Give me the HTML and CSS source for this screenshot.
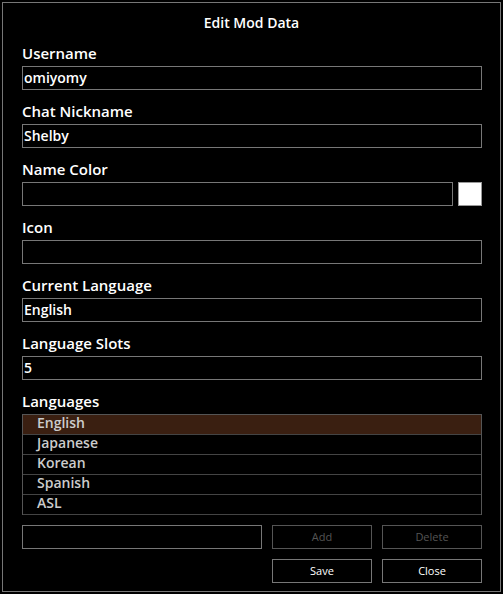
FILE: index.html
```html
<!DOCTYPE html>
<html>
<head>
<meta charset="utf-8">
<link rel="stylesheet" href="styles.css">
</head>
<body>
<div class="dialog">
  <div class="title">Edit Mod Data</div>
  <div class="group">
    <div class="label">Username</div>
    <div class="input">omiyomy</div>
  </div>
  <div class="group">
    <div class="label">Chat Nickname</div>
    <div class="input">Shelby</div>
  </div>
  <div class="group">
    <div class="label">Name Color</div>
    <div class="color-row">
      <div class="input grow"></div>
      <div class="swatch"></div>
    </div>
  </div>
  <div class="group">
    <div class="label">Icon</div>
    <div class="input"></div>
  </div>
  <div class="group">
    <div class="label">Current Language</div>
    <div class="input">English</div>
  </div>
  <div class="group">
    <div class="label">Language Slots</div>
    <div class="input">5</div>
  </div>
  <div class="group">
    <div class="label">Languages</div>
    <div class="list">
      <div class="item selected">English</div>
      <div class="item">Japanese</div>
      <div class="item">Korean</div>
      <div class="item">Spanish</div>
      <div class="item">ASL</div>
    </div>
  </div>
  <div class="actions">
    <div class="input new"></div>
    <div class="btn disabled">Add</div>
    <div class="btn disabled">Delete</div>
  </div>
  <div class="actions last">
    <div class="spacer"></div>
    <div class="btn">Save</div>
    <div class="btn">Close</div>
  </div>
</div>
</body>
</html>
```

FILE: styles.css
```css
html, body {
  margin: 0;
  padding: 0;
  background: #000;
}
body {
  font-family: "Open Sans", "Noto Sans", sans-serif;
  color: #fff;
  padding: 2px;
}
.dialog {
  width: 497px;
  height: 588px;
  border: 1px solid #777;
  box-sizing: content-box;
  padding: 0;
  display: flex;
  flex-direction: column;
}
.dialog > * {
  flex-shrink: 0;
}
.title {
  height: 43px;
  line-height: 40px;
  text-align: center;
  font-size: 14px;
  font-weight: 600;
}
.group {
  padding-left: 19px;
  width: 460px;
  margin-bottom: 14px;
}
.label {
  height: 20px;
  line-height: 15px;
  font-size: 15px;
  font-weight: 600;
}
.input {
  height: 24px;
  border: 1px solid #777;
  box-sizing: border-box;
  line-height: 22px;
  padding-left: 1px;
  font-size: 14px;
  font-weight: 600;
  color: #fff;
}
.color-row {
  display: flex;
  gap: 5px;
}
.grow {
  flex: 1;
}
.swatch {
  width: 24px;
  height: 24px;
  box-sizing: border-box;
  background: #fff;
  border: 1px solid #999;
}
.list {
  border: 1px solid #555;
  border-bottom: none;
  margin-bottom: -4px;
}
.item {
  height: 20px;
  box-sizing: border-box;
  border-bottom: 1px solid #444;
  line-height: 16px;
  padding-left: 14px;
  font-size: 14px;
  font-weight: 600;
  color: #ccc;
}
.item.selected {
  background: #3a1f11;
}
.actions {
  padding-left: 19px;
  width: 460px;
  display: flex;
  gap: 10px;
  margin-bottom: 10px;
}
.actions.last {
  margin-bottom: 0;
}
.new {
  width: 240px;
}
.spacer {
  width: 240px;
}
.btn {
  width: 100px;
  height: 24px;
  box-sizing: border-box;
  border: 1px solid #777;
  text-align: center;
  line-height: 22px;
  font-size: 11px;
  color: #fff;
}
.btn.disabled {
  color: #555;
  border-color: #555;
}
```
